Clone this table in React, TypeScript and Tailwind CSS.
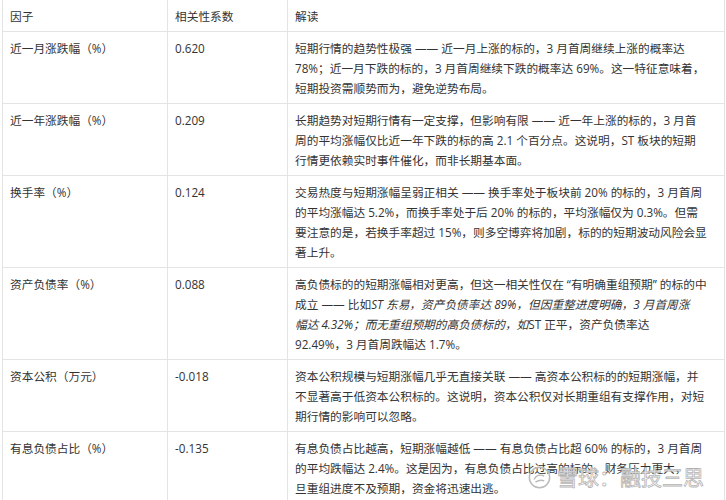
import type { ReactNode } from "react";

interface FactorRow {
  name: string;
  coef: string;
  // lines as they break in the source layout
  lines: ReactNode[];
}

const rows: FactorRow[] = [
  {
    name: "近一月涨跌幅（%）",
    coef: "0.620",
    lines: [
      "短期行情的趋势性极强 —— 近一月上涨的标的，3 月首周继续上涨的概率达",
      "78%；近一月下跌的标的，3 月首周继续下跌的概率达 69%。这一特征意味着，",
      "短期投资需顺势而为，避免逆势布局。",
    ],
  },
  {
    name: "近一年涨跌幅（%）",
    coef: "0.209",
    lines: [
      "长期趋势对短期行情有一定支撑，但影响有限 —— 近一年上涨的标的，3 月首",
      "周的平均涨幅仅比近一年下跌的标的高 2.1 个百分点。这说明，ST 板块的短期",
      "行情更依赖实时事件催化，而非长期基本面。",
    ],
  },
  {
    name: "换手率（%）",
    coef: "0.124",
    lines: [
      "交易热度与短期涨幅呈弱正相关 —— 换手率处于板块前 20% 的标的，3 月首周",
      "的平均涨幅达 5.2%，而换手率处于后 20% 的标的，平均涨幅仅为 0.3%。但需",
      "要注意的是，若换手率超过 15%，则多空博弈将加剧，标的的短期波动风险会显",
      "著上升。",
    ],
  },
  {
    name: "资产负债率（%）",
    coef: "0.088",
    lines: [
      "高负债标的的短期涨幅相对更高，但这一相关性仅在 “有明确重组预期” 的标的中",
      <>
        成立 —— 比如<em>ST 东易，资产负债率达 89%，但因重整进度明确，3 月首周涨</em>
      </>,
      <>
        <em>幅达 4.32%；而无重组预期的高负债标的，如</em>ST 正平，资产负债率达
      </>,
      "92.49%，3 月首周跌幅达 1.7%。",
    ],
  },
  {
    name: "资本公积（万元）",
    coef: "-0.018",
    lines: [
      "资本公积规模与短期涨幅几乎无直接关联 —— 高资本公积标的的短期涨幅，并",
      "不显著高于低资本公积标的。这说明，资本公积仅对长期重组有支撑作用，对短",
      "期行情的影响可以忽略。",
    ],
  },
  {
    name: "有息负债占比（%）",
    coef: "-0.135",
    lines: [
      "有息负债占比越高，短期涨幅越低 —— 有息负债占比超 60% 的标的，3 月首周",
      "的平均跌幅达 2.4%。这是因为，有息负债占比过高的标的，财务压力更大，一",
      "旦重组进度不及预期，资金将迅速出逃。",
    ],
  },
];

const cell = "border border-[#e4e4e4] pl-[7px] pr-[5px] pt-[6px] pb-[5px] align-top text-left font-normal";

export default function App() {
  return (
    <div className="relative w-[726px] h-[500px] overflow-hidden bg-white text-[11.7px] leading-5 text-[#333] font-['Open_Sans','Noto_Sans_CJK_SC',sans-serif]">
      <table className="ml-[2px] w-[723px] border-collapse table-fixed">
        <colgroup>
          <col className="w-[165px]" />
          <col className="w-[120px]" />
          <col />
        </colgroup>
        <thead>
          <tr>
            <th className={`${cell} border-t-0`}>因子</th>
            <th className={`${cell} border-t-0`}>相关性系数</th>
            <th className={`${cell} border-t-0`}>解读</th>
          </tr>
        </thead>
        <tbody>
          {rows.map((r) => (
            <tr key={r.name}>
              <td className={cell}>{r.name}</td>
              <td className={cell}>{r.coef}</td>
              <td className={`${cell} pr-0`}>
                {r.lines.map((l, i) => (
                  <div key={i} className="whitespace-nowrap">
                    {l}
                  </div>
                ))}
              </td>
            </tr>
          ))}
        </tbody>
      </table>

      {/* watermark */}
      <div className="absolute left-[528px] top-[466px] flex items-center gap-[6px] whitespace-nowrap text-[21px] leading-none text-[rgba(255,255,255,0.8)] [-webkit-text-stroke:0.8px_#b5b5b5]">
        <svg width="23" height="23" viewBox="0 0 34 34" fill="none" stroke="#bbbbbb" strokeWidth="2.2">
          <circle cx="17" cy="17" r="15" />
          <path d="M9 20c3-6 9-8 15-5" />
          <path d="M11 24c4-3 8-4 13-2" />
        </svg>
        <span>雪球：融技三思</span>
      </div>
    </div>
  );
}
